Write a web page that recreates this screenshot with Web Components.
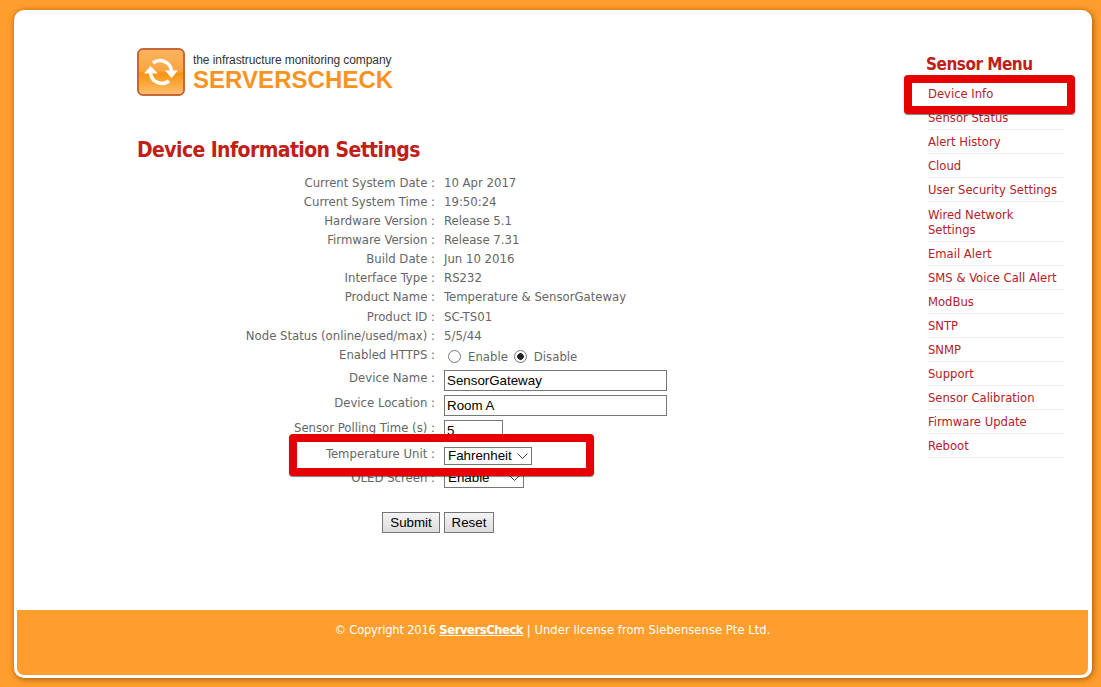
<!DOCTYPE html>
<html lang="en">
<head>
<meta charset="utf-8">
<title>Device Information Settings</title>
<style>
    html, body { margin: 0; height: 100%; }
    body {
        background: #ff9e2c;
        font-family: "DejaVu Sans Condensed", "DejaVu Sans", sans-serif;
        font-stretch: condensed;
        box-sizing: border-box;
        padding: 10px 9px 9px 14px;
        overflow: hidden;
    }
</style>
</head>
<body>
<sc-page>
    <sc-logo slot="left"></sc-logo>
    <sc-title slot="left">Device Information Settings</sc-title>
    <sc-device-form slot="left"></sc-device-form>
    <sc-menu slot="right"></sc-menu>
    <sc-footer slot="footer"></sc-footer>
</sc-page>

<script>
class ScPage extends HTMLElement {
    constructor() {
        super();
        this.attachShadow({ mode: "open" });
        this.shadowRoot.innerHTML = `
            <style>
                :host {
                    display: flex;
                    flex-direction: column;
                    height: 668px;
                    background: #fff;
                    border-radius: 10px;
                    padding: 0 4px 3px 3px;
                    box-sizing: border-box;
                    box-shadow: 1px 1px 6px rgba(130, 70, 0, 0.8);
                }
                .main {
                    flex: 1;
                    display: flex;
                    justify-content: space-between;
                    padding: 38px 24px 0 120px;
                }
                .left { display: flex; flex-direction: column; width: 640px; }
                .right { width: 136px; padding-top: 4px; }
            </style>
            <div class="main">
                <div class="left"><slot name="left"></slot></div>
                <div class="right"><slot name="right"></slot></div>
            </div>
            <slot name="footer"></slot>
        `;
    }
}

class ScLogo extends HTMLElement {
    constructor() {
        super();
        this.attachShadow({ mode: "open" });
        this.shadowRoot.innerHTML = `
            <style>
                :host { display: flex; gap: 8px; height: 48px; font-family: "Liberation Sans", Arial, sans-serif; }
                svg { width: 48px; height: 48px; flex: none; }
                .txt { display: flex; flex-direction: column; padding-top: 5px; }
                .tag { font-size: 12px; line-height: 14px; color: #333; letter-spacing: -0.08px; white-space: nowrap; }
                .name { font-size: 24px; line-height: 25px; font-weight: bold; color: #f7931e; letter-spacing: 0.05px; white-space: nowrap; }
            </style>
            <svg viewBox="0 0 48 48">
                <defs>
                    <linearGradient id="cara" x1="0" y1="0" x2="0" y2="1">
                        <stop offset="0" stop-color="#fbb45e"/>
                        <stop offset="0.48" stop-color="#f9a544"/>
                        <stop offset="0.52" stop-color="#f7930f"/>
                        <stop offset="1" stop-color="#fcc070"/>
                    </linearGradient>
                </defs>
                <rect x="1" y="1" width="46" height="46" rx="5" fill="url(#cara)" stroke="#c9653a" stroke-width="2"/>
                <path d="M16 15 A11.5 11.5 0 0 1 34.5 23" fill="none" stroke="#fff" stroke-width="3.5"/>
                <path d="M28 22.5 L41 22.5 L34.5 30 Z" fill="#fff"/>
                <path d="M32 33 A11.5 11.5 0 0 1 13.5 25" fill="none" stroke="#fff" stroke-width="3.5"/>
                <path d="M7 25.5 L21 25.5 L13.5 18 Z" fill="#fff"/>
            </svg>
            <div class="txt">
                <span class="tag">the infrastructure monitoring company</span>
                <span class="name">SERVERSCHECK</span>
            </div>
        `;
    }
}

class ScTitle extends HTMLElement {
    constructor() {
        super();
        this.attachShadow({ mode: "open" });
        this.shadowRoot.innerHTML = `
            <style>
                :host {
                    display: block;
                    margin-top: 40px;
                    font-size: 21px;
                    line-height: 28px;
                    font-weight: bold;
                    letter-spacing: -0.6px;
                    color: #c1201a;
                    white-space: nowrap;
                }
            </style>
            <slot></slot>
        `;
    }
}

// Fila etiqueta : valor del formulario
class ScRow extends HTMLElement {
    constructor() {
        super();
        this.attachShadow({ mode: "open" });
        const alto = this.getAttribute("alto") || 19;
        const tope = this.getAttribute("tope") || 0;
        const etiqueta = this.getAttribute("etiqueta");
        this.shadowRoot.innerHTML = `
            <style>
                :host {
                    display: flex;
                    gap: 9px;
                    height: ${alto}px;
                    font-size: 13px;
                    line-height: 19px;
                    color: #666;
                    white-space: nowrap;
                }
                .et { width: 298px; flex: none; text-align: right; }
                .val { padding-top: ${tope}px; }
            </style>
            <div class="et">${etiqueta} :</div>
            <div class="val"><slot></slot></div>
        `;
    }
}

// Recuadro rojo de las anotaciones, por detrás de su propio contenido
class ScHighlight extends HTMLElement {
    constructor() {
        super();
        this.attachShadow({ mode: "open" });
        const [t, r, b, l] = this.getAttribute("margen").split(" ");
        this.shadowRoot.innerHTML = `
            <style>
                :host { display: block; position: relative; z-index: 1; }
                .caja {
                    position: absolute;
                    top: ${t}px; right: ${r}px; bottom: ${b}px; left: ${l}px;
                    z-index: -1;
                    background: #fff;
                    border: 8px solid #e60000;
                    border-radius: 4px;
                    box-shadow: 0 1px 1px rgba(0, 0, 0, 0.5);
                }
            </style>
            <div class="caja"></div>
            <slot></slot>
        `;
    }
}

class ScDeviceForm extends HTMLElement {
    constructor() {
        super();
        this.attachShadow({ mode: "open" });
        const filas = [
            ["Current System Date", "10 Apr 2017"],
            ["Current System Time", "19:50:24"],
            ["Hardware Version", "Release 5.1"],
            ["Firmware Version", "Release 7.31"],
            ["Build Date", "Jun 10 2016"],
            ["Interface Type", "RS232"],
            ["Product Name", "Temperature &amp; SensorGateway", 20],
            ["Product ID", "SC-TS01"],
            ["Node Status (online/used/max)", "5/5/44"],
        ];
        const flecha = "data:image/svg+xml," + encodeURIComponent(
            '<svg xmlns="http://www.w3.org/2000/svg" width="11" height="6"><path d="M0.5 0.5 L5.5 5.5 L10.5 0.5" fill="none" stroke="#444" stroke-width="1"/></svg>'
        );
        this.shadowRoot.innerHTML = `
            <style>
                :host { display: block; margin-top: 9px; }
                input[type=text], select, button {
                    font-family: "Liberation Sans", Arial, sans-serif;
                    font-size: 13.33px;
                    color: #000;
                    box-sizing: border-box;
                    margin: 0;
                    display: block;
                }
                input[type=text] {
                    border: 1px solid #767676;
                    padding: 0 2px 1px;
                    height: 21px;
                    border-radius: 0;
                    background: #fff;
                }
                select {
                    appearance: none;
                    border: 1px solid #767676;
                    border-radius: 0;
                    background: #fff url("${flecha}") no-repeat right 3px center;
                    padding: 0 0 1px 3px;
                }
                .radios { display: flex; align-items: center; height: 22px; line-height: 22px; padding-left: 4px; }
                .radios input {
                    appearance: none;
                    margin: 0 7px 0 0;
                    width: 13px;
                    height: 13px;
                    border: 1px solid #767676;
                    border-radius: 50%;
                    background: #fff;
                    box-sizing: border-box;
                }
                .radios input:checked { background: radial-gradient(circle, #222 0 3px, #fff 3.6px); }
                .radios label { margin-right: 6px; padding-top: 2px; }
                .botones {
                    display: flex;
                    justify-content: flex-end;
                    gap: 4px;
                    margin-top: 23px;
                    width: 357px;
                }
                button {
                    height: 21px;
                    padding: 0 0 1px;
                    border: 1px solid #767676;
                    border-radius: 0;
                    background: linear-gradient(#f4f4f4, #dcdcdc);
                }
            </style>
            ${filas.map(([e, v, a]) => `<sc-row etiqueta="${e}" alto="${a || 19}">${v}</sc-row>`).join("")}
            <sc-row etiqueta="Enabled HTTPS" alto="23">
                <div class="radios">
                    <input type="radio" name="https" id="si"><label for="si">Enable</label>
                    <input type="radio" name="https" id="no" checked><label for="no">Disable</label>
                </div>
            </sc-row>
            <sc-row etiqueta="Device Name" alto="25" tope="2"><input type="text" value="SensorGateway" style="width:223px"></sc-row>
            <sc-row etiqueta="Device Location" alto="25" tope="2"><input type="text" value="Room A" style="width:223px"></sc-row>
            <sc-row etiqueta="Sensor Polling Time (s)" alto="26" tope="2"><input type="text" value="5" style="width:59px"></sc-row>
            <sc-highlight margen="-10 183 -8 152">
                <sc-row etiqueta="Temperature Unit" alto="24" tope="3">
                    <select style="width:88px;height:18px"><option>Fahrenheit</option></select>
                </sc-row>
            </sc-highlight>
            <sc-row etiqueta="OLED Screen" alto="21"><select style="width:80px;height:20px"><option>Enable</option></select></sc-row>
            <div class="botones"><button style="width:58px">Submit</button><button style="width:50px">Reset</button></div>
        `;
    }
}

class ScMenu extends HTMLElement {
    constructor() {
        super();
        this.attachShadow({ mode: "open" });
        const items = [
            "Sensor Status", "Alert History", "Cloud", "User Security Settings",
            "Wired Network<br>Settings", "Email Alert", "SMS &amp; Voice Call Alert", "ModBus",
            "SNTP", "SNMP", "Support", "Sensor Calibration", "Firmware Update", "Reboot",
        ];
        this.shadowRoot.innerHTML = `
            <style>
                :host { display: block; color: #b5202a; }
                h3 {
                    margin: 0 0 6px -2px;
                    font-size: 17px;
                    line-height: 24px;
                    font-weight: bold;
                    letter-spacing: -0.5px;
                    color: #c1201a;
                    white-space: nowrap;
                }
                a {
                    display: block;
                    color: inherit;
                    text-decoration: none;
                    font-size: 12.9px;
                    line-height: 15px;
                    padding: 4px 0;
                    border-bottom: 1px solid #eee;
                }
                a.doble { padding-top: 5px; }
                sc-highlight a { border-bottom-color: transparent; }
            </style>
            <h3>Sensor Menu</h3>
            <sc-highlight margen="-7 -11 -8 -24">
                <a href="#">Device Info</a>
            </sc-highlight>
            ${items.map((i) => `<a href="#"${i.includes("<br>") ? ' class="doble"' : ""}>${i}</a>`).join("")}
        `;
    }
}

class ScFooter extends HTMLElement {
    constructor() {
        super();
        this.attachShadow({ mode: "open" });
        this.shadowRoot.innerHTML = `
            <style>
                :host {
                    display: block;
                    height: 65px;
                    background: #ff9e2c;
                    border-radius: 0 0 7px 7px;
                    color: #fff;
                    font-size: 12.8px;
                    line-height: 19px;
                    padding-top: 10px;
                    box-sizing: border-box;
                    text-align: center;
                }
                a { color: inherit; font-weight: bold; letter-spacing: -0.4px; }
                .pre { letter-spacing: -0.2px; }
                .post { letter-spacing: 0.07px; }
            </style>
            <span class="pre">© Copyright 2016</span> <a href="#">ServersCheck</a> <span class="post">| Under license from Siebensense Pte Ltd.</span>
        `;
    }
}

customElements.define("sc-row", ScRow);
customElements.define("sc-highlight", ScHighlight);
customElements.define("sc-logo", ScLogo);
customElements.define("sc-title", ScTitle);
customElements.define("sc-device-form", ScDeviceForm);
customElements.define("sc-menu", ScMenu);
customElements.define("sc-footer", ScFooter);
customElements.define("sc-page", ScPage);
</script>
</body>
</html>
